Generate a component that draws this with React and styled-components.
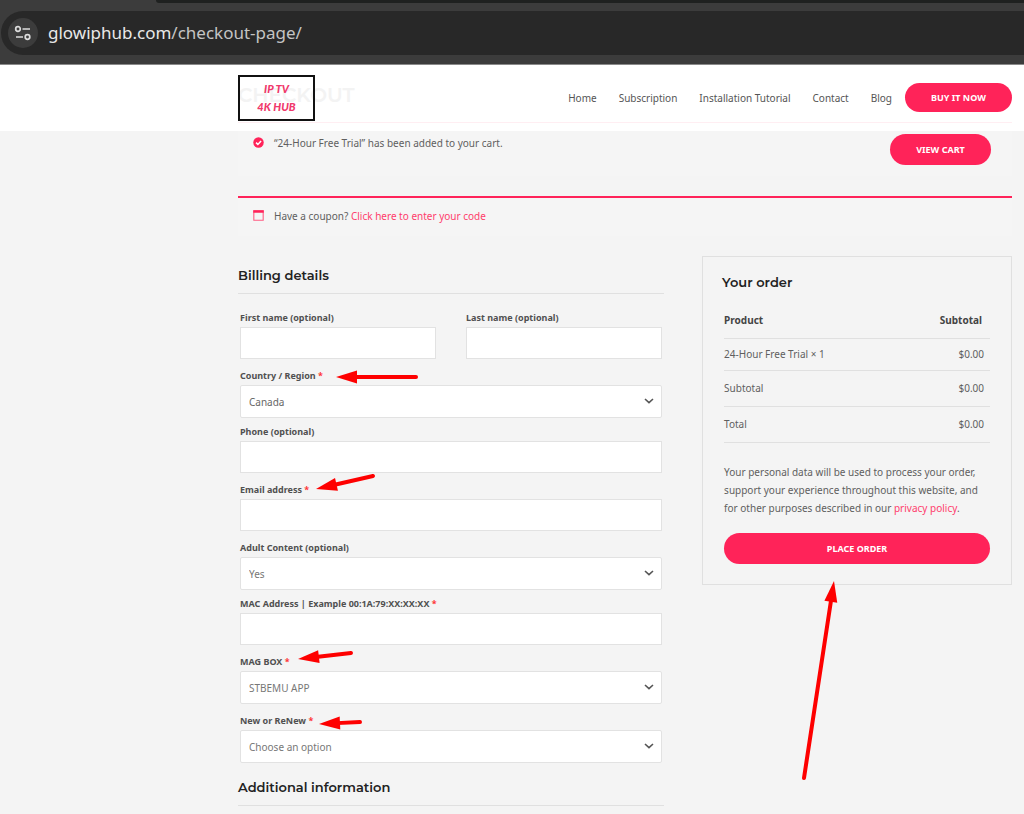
import { useId } from "react";
import styled, { createGlobalStyle, css } from "styled-components";

const fields = [
    { label: "Country / Region", required: true, value: "Canada", dark: true, arrow: { x: 96, y: 10, dx: 80, dy: 0 } },
    { label: "Phone (optional)", type: "tel" },
    { label: "Email address", required: true, type: "email", arrow: { x: 76, y: 8, dx: 57, dy: -13 } },
    { label: "Adult Content (optional)", value: "Yes" },
    { label: "MAC Address | Example 00:1A:79:XX:XX:XX", required: true, type: "text" },
    { label: "MAG BOX", required: true, value: "STBEMU APP", spaced: true, arrow: { x: 58, y: 6, dx: 53, dy: -6 } },
    { label: "New or ReNew", required: true, value: "Choose an option", arrow: { x: 79, y: 12, dx: 41, dy: -2 } },
];

// the tip sits at the svg origin, the tail at (dx, dy)
function Arrow({ x, y, dx, dy }) {
    const angle = (Math.atan2(dy, dx) * 180) / Math.PI;
    const length = Math.hypot(dx, dy);
    return (
        <ArrowSvg $x={x} $y={y} width="1" height="1" aria-hidden="true">
            <g transform={`rotate(${angle})`}>
                <path d={`M18 0H${length}`} stroke="#fe0000" strokeWidth="4" strokeLinecap="round" />
                <path d="M0 0L21 -6.5V6.5Z" fill="#fe0000" />
            </g>
        </ArrowSvg>
    );
}

function FormField({ label, required, type, value, dark, spaced, arrow }) {
    const id = useId();
    return (
        <Field $select={!!value} $spaced={spaced}>
            <Label htmlFor={id}>{label}{required && <Required> *</Required>}</Label>
            {value ? (
                <SelectWrap>
                    <Select id={id} $dark={dark} defaultValue={value}>
                        <option>{value}</option>
                    </Select>
                    <Chevron viewBox="0 0 10 6" aria-hidden="true">
                        <path d="M1 1L5 4.6L9 1" fill="none" stroke="#555" strokeWidth="1.6" />
                    </Chevron>
                </SelectWrap>
            ) : (
                <Input id={id} type={type} />
            )}
            {arrow && <Arrow {...arrow} />}
        </Field>
    );
}

function App() {
    return (
        <>
            <GlobalStyle />
            <Browser>
                <TabStrip />
                <AddressBar>
                    <SiteButton aria-label="Site information">
                        <svg width="18" height="16" viewBox="0 0 18 16" fill="none" stroke="#dcdcdc" strokeWidth="1.7">
                            <circle cx="4" cy="4" r="2.3" />
                            <path d="M8.5 4H16M2 12H9" />
                            <circle cx="13.5" cy="12" r="2.3" />
                        </svg>
                    </SiteButton>
                    <Url>glowiphub.com<span>/checkout-page/</span></Url>
                </AddressBar>
            </Browser>
            <Header>
                <HeaderInner>
                    <PageTitle>CHECKOUT</PageTitle>
                    <Logo href="#"><span>IP TV</span><span>4K HUB</span></Logo>
                    <Nav>
                        <a href="#">Home</a>
                        <a href="#">Subscription</a>
                        <a href="#">Installation Tutorial</a>
                        <a href="#">Contact</a>
                        <a href="#">Blog</a>
                    </Nav>
                    <BuyButton href="#">BUY IT NOW</BuyButton>
                </HeaderInner>
            </Header>
            <Main>
                <CartNotice>
                    <NoticeIcon viewBox="0 0 12 12" aria-hidden="true">
                        <circle cx="6" cy="6" r="5.7" fill="#ff2359" />
                        <path d="M3.3 6.2L5.3 8.1L8.8 4.3" fill="none" stroke="#fff" strokeWidth="1.7" />
                    </NoticeIcon>
                    <p>“24-Hour Free Trial” has been added to your cart.</p>
                    <CartButton href="#">VIEW CART</CartButton>
                </CartNotice>
                <CouponNotice>
                    <NoticeIcon viewBox="0 0 12 12" aria-hidden="true">
                        <path d="M.9 .9H11.1V11.1H.9Z" fill="none" stroke="#ff5c83" strokeWidth="1.2" />
                        <path d="M.3 .3H11.7V3H.3Z" fill="#ff2359" />
                    </NoticeIcon>
                    <p>Have a coupon? <a href="#">Click here to enter your code</a></p>
                </CouponNotice>
                <Columns>
                    <form>
                        <Heading>Billing details</Heading>
                        <Fields>
                            <NameRow>
                                <FormField label="First name (optional)" type="text" />
                                <FormField label="Last name (optional)" type="text" />
                            </NameRow>
                            {fields.map((field) => <FormField key={field.label} {...field} />)}
                        </Fields>
                        <Heading>Additional information</Heading>
                    </form>
                    <OrderBox>
                        <OrderTitle>Your order</OrderTitle>
                        <OrderBody>
                            <OrderTable>
                                <thead>
                                    <tr><th>Product</th><th>Subtotal</th></tr>
                                </thead>
                                <tbody>
                                    <ItemRow><td>24-Hour Free Trial × 1</td><td>$0.00</td></ItemRow>
                                    <tr><td>Subtotal</td><td>$0.00</td></tr>
                                    <tr><td>Total</td><td>$0.00</td></tr>
                                </tbody>
                            </OrderTable>
                            <Privacy>
                                Your personal data will be used to process your order, support your experience
                                throughout this website, and for other purposes described in our <a href="#">privacy policy</a>.
                            </Privacy>
                            <PlaceOrder type="button">PLACE ORDER</PlaceOrder>
                        </OrderBody>
                        <Arrow x={131} y={324} dx={-30} dy={197} />
                    </OrderBox>
                </Columns>
            </Main>
        </>
    );
}
export default App;

const GlobalStyle = createGlobalStyle`
    *{
        box-sizing: border-box;
    }
    body{
        margin: 0;
        background: #f4f4f4;
        color: #5f5f5f;
        font-family: "Noto Sans", "Open Sans", sans-serif;
        font-size: 10px;
        line-height: 18px;
        overflow-x: hidden;
    }
    h1, h2, p{
        margin: 0;
    }
    a{
        color: #ff3d6c;
        text-decoration: none;
    }
`
const headingFont = css`
    font-family: Montserrat, Inter, sans-serif;
    font-weight: 600;
`
const pill = css`
    display: flex;
    align-items: center;
    justify-content: center;
    height: 31px;
    border: 0;
    border-radius: 16px;
    background: #ff2359;
    color: #fff;
    font-family: inherit;
    font-size: 9px;
    font-weight: 700;
`
const Browser = styled.div`
    height: 65px;
    background: #3c3c3c;
    border-bottom: 1px solid #8a8a8a;
`
const TabStrip = styled.div`
    height: 3px;
    margin-left: 156px;
    margin-bottom: 8px;
    background: #1f2120;
    border-bottom-left-radius: 8px;
`
const AddressBar = styled.div`
    display: flex;
    align-items: center;
    gap: 10px;
    height: 44px;
    margin-left: 1px;
    padding-left: 7px;
    background: #282828;
    border-radius: 22px 0 0 22px;
`
const SiteButton = styled.button`
    display: flex;
    align-items: center;
    justify-content: center;
    width: 30px;
    height: 30px;
    padding: 0;
    border: 0;
    border-radius: 50%;
    background: #3c3c3c;
`
const Url = styled.div`
    color: #e8e8e8;
    font-family: "Segoe UI", "Noto Sans", sans-serif;
    font-size: 17px;
    line-height: 24px;
    span{
        color: #c4c4c4;
    }
`
const Header = styled.header`
    height: 66px;
    padding: 0 12px 0 238px;
    background: #fff;
`
const HeaderInner = styled.div`
    position: relative;
    display: flex;
    align-items: center;
    height: 58px;
    padding-top: 8px;
    border-bottom: 1px solid #ffeef2;
`
const PageTitle = styled.h1`
    ${headingFont}
    position: absolute;
    left: 0;
    top: 18px;
    color: #f3f3f3;
    font-size: 20px;
    line-height: 24px;
`
const Logo = styled.a`
    position: relative;
    display: flex;
    flex-direction: column;
    align-items: center;
    justify-content: center;
    width: 77px;
    height: 46px;
    border: 2px solid #111;
    color: #f0386b;
    font-family: Lato, sans-serif;
    font-size: 11px;
    font-style: italic;
    font-weight: 900;
`
const Nav = styled.nav`
    display: flex;
    gap: 22px;
    margin-left: auto;
    a{
        color: #555;
    }
`
const BuyButton = styled.a`
    ${pill}
    width: 107px;
    height: 29px;
    margin-left: 13px;
`
const Main = styled.main`
    padding: 0 12px 0 238px;
`
const Notice = styled.div`
    display: flex;
    align-items: flex-start;
    padding: 0 21px 0 15px;
    background: #f5f5f5;
`
const CartNotice = styled(Notice)`
    height: 45px;
    padding-top: 3px;
    margin-bottom: 20px;
`
const CouponNotice = styled(Notice)`
    height: 40px;
    padding-top: 9px;
    margin-bottom: 20px;
    border-top: 2px solid #ff2359;
`
const NoticeIcon = styled.svg`
    width: 11px;
    height: 11px;
    margin: 3px 10px 0 0;
`
const CartButton = styled.a`
    ${pill}
    width: 101px;
    margin-left: auto;
`
const Columns = styled.div`
    display: grid;
    grid-template-columns: 55fr 40fr;
    column-gap: 38px;
    align-items: start;
`
const Heading = styled.h2`
    ${headingFont}
    height: 38px;
    padding-top: 10px;
    border-bottom: 1px solid #e0e0e0;
    color: #222;
    font-size: 13px;
    line-height: 18px;
`
const Fields = styled.div`
    padding: 15px 2px 0;
`
const NameRow = styled.div`
    display: grid;
    grid-template-columns: 1fr 1fr;
    gap: 30px;
`
const Field = styled.div`
    position: relative;
    margin-bottom: ${({ $select, $spaced }) => ($select && !$spaced ? 5 : 8)}px;
`
const Label = styled.label`
    display: block;
    color: #505050;
    font-size: 9px;
    font-weight: 700;
`
const Required = styled.span`
    color: #f33;
`
const control = css`
    display: block;
    width: 100%;
    height: 32px;
    padding: 0 8px;
    border: 1px solid #e2e2e2;
    border-radius: 0;
    background: #fff;
    font-family: inherit;
    font-size: 10px;
    outline: none;
`
const Input = styled.input`
    ${control}
`
const SelectWrap = styled.div`
    position: relative;
`
const Select = styled.select`
    ${control}
    height: 33px;
    border-radius: 2px;
    appearance: none;
    color: ${({ $dark }) => ($dark ? "#666" : "#777")};
`
const Chevron = styled.svg`
    position: absolute;
    right: 8px;
    top: 13px;
    width: 10px;
    height: 6px;
    pointer-events: none;
`
const OrderBox = styled.section`
    position: relative;
    padding: 16px 21px 20px 19px;
    border: 1px solid #e0e0e0;
`
const OrderTitle = styled.h2`
    ${headingFont}
    color: #222;
    font-size: 13px;
    line-height: 18px;
`
const OrderBody = styled.div`
    padding: 11px 0 0 2px;
`
const OrderTable = styled.table`
    width: 100%;
    border-collapse: collapse;
    th, td{
        height: 36px;
        padding: 0;
        border-bottom: 1px solid #e0e0e0;
        text-align: left;
    }
    th{
        color: #444;
    }
    th:last-child{
        padding-right: 8px;
        text-align: right;
    }
    td:last-child{
        padding-right: 6px;
        text-align: right;
    }
`
const ItemRow = styled.tr`
    && td{
        height: 32px;
    }
`
const Privacy = styled.p`
    padding: 20px 0 16px;
`
const PlaceOrder = styled.button`
    ${pill}
    width: 100%;
`
const ArrowSvg = styled.svg`
    position: absolute;
    left: ${({ $x }) => $x}px;
    top: ${({ $y }) => $y}px;
    overflow: visible;
    pointer-events: none;
`
